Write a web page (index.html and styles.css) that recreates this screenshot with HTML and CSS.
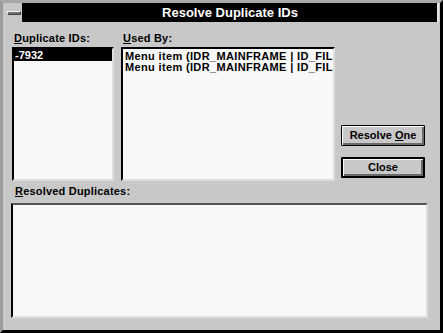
FILE: index.html
```html
<!DOCTYPE html>
<html>
<head>
<meta charset="utf-8">
<link rel="stylesheet" href="styles.css">
</head>
<body>
<div class="window">
  <div class="titlebar">
    <div class="sysmenu"><span class="dash"></span></div>
    <div class="title">Resolve Duplicate IDs</div>
  </div>
  <div class="content">
    <div class="top">
      <div class="col dup">
        <div class="label"><u>D</u>uplicate IDs:</div>
        <div class="list">
          <div class="item selected">-7932</div>
        </div>
      </div>
      <div class="col used">
        <div class="label"><u>U</u>sed By:</div>
        <div class="list">
          <div class="item">Menu item (IDR_MAINFRAME | ID_FIL</div>
          <div class="item">Menu item (IDR_MAINFRAME | ID_FIL</div>
        </div>
      </div>
      <div class="buttons">
        <div class="btn">Resolve <u>O</u>ne</div>
        <div class="btn default">Close</div>
      </div>
    </div>
    <div class="label resolved-label"><u>R</u>esolved Duplicates:</div>
    <div class="list resolved"></div>
  </div>
</div>
</body>
</html>
```

FILE: styles.css
```css
html, body {
  margin: 0;
  padding: 0;
  width: 443px;
  height: 333px;
  overflow: hidden;
  background: #c8c8c8;
  font-family: "Liberation Sans", Arial, sans-serif;
}

.window {
  box-sizing: border-box;
  width: 443px;
  height: 333px;
  background: #c8c8c8;
  border-left: 3px solid #9c9c9c;
  border-top: 3px solid #a8a8a8;
  border-right: 3px solid #000;
  border-bottom: 3px solid #000;
  display: flex;
  flex-direction: column;
}

.titlebar {
  margin: 0 1px 0 2px;
  height: 19px;
  background: #000;
  display: flex;
  border-right: 2px solid #e4e4e4;
}

.sysmenu {
  width: 17px;
  height: 19px;
  background: #c8c8c8;
  border-right: 1px solid #000;
  display: flex;
  align-items: center;
  justify-content: center;
}

.dash {
  display: block;
  width: 12px;
  height: 2px;
  background: #707070;
  border: 1px solid #f0f0f0;
  border-right-color: #404040;
  border-bottom-color: #404040;
}

.title {
  flex: 1;
  color: #fff;
  font-weight: bold;
  font-size: 13px;
  line-height: 19px;
  text-align: center;
}

.content {
  flex: 1;
  padding: 10px 12px 9px 8px;
  display: flex;
  flex-direction: column;
}

.top {
  display: flex;
  height: 149px;
}

.col {
  display: flex;
  flex-direction: column;
}

.dup {
  width: 102px;
  margin-left: 1px;
}

.used {
  width: 214px;
  margin-left: 7px;
}

.label {
  font-size: 11px;
  font-weight: bold;
  letter-spacing: 0.2px;
  color: #000;
  height: 15px;
  line-height: 12px;
  padding-left: 2px;
}

.list {
  flex: 1;
  box-sizing: border-box;
  background: #f8f8f8;
  border-top: 2px solid #000;
  border-left: 2px solid #000;
  border-right: 2px solid #dedede;
  border-bottom: 2px solid #dedede;
  overflow: hidden;
}

.item {
  font-size: 11px;
  font-weight: bold;
  line-height: 12px;
  height: 12px;
  white-space: nowrap;
  color: #000;
  padding-left: 1px;
}

.used .list {
  padding-top: 2px;
}

.used .item {
  padding-left: 2px;
  letter-spacing: 0.35px;
  height: 11px;
  line-height: 11px;
}

.selected {
  background: #000;
  color: #fff;
}

.buttons {
  width: 84px;
  margin-left: 6px;
  display: flex;
  flex-direction: column;
  justify-content: flex-end;
  gap: 11px;
  padding-bottom: 3px;
}

.btn {
  box-sizing: border-box;
  height: 21px;
  border: 1px solid #000;
  border-radius: 1px;
  box-shadow: inset 1px 1px 0 #fafafa, inset -2px -2px 0 #6a6a6a;
  background: #c8c8c8;
  font-size: 11px;
  font-weight: bold;
  text-align: center;
  line-height: 19px;
  color: #000;
}

.btn.default {
  border-width: 2px;
  line-height: 17px;
}

.resolved-label {
  margin-top: 4px;
  height: 18px;
  line-height: 13px;
  padding-left: 4px;
}

.list.resolved {
  height: 115px;
  flex: none;
  border-top: 2px solid #555;
}
```
